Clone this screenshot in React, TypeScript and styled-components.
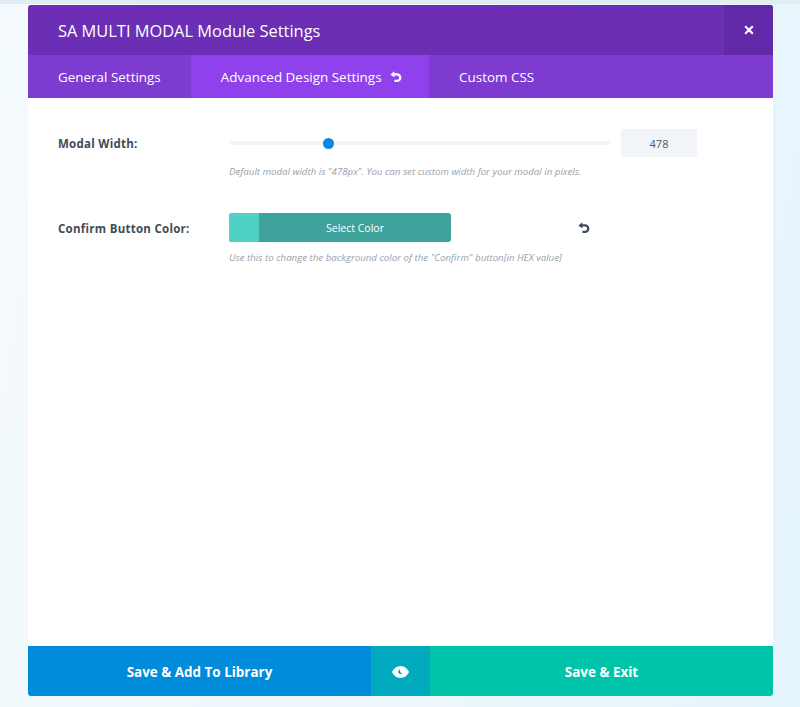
import * as React from 'react';
import styled, { createGlobalStyle } from 'styled-components';

const GlobalStyle = createGlobalStyle`
    html, body {
        margin: 0;
        padding: 0;
        height: 100%;
    }
    body {
        background: linear-gradient(100deg, #f4fafe 0%, #eef7fc 50%, #e6f4fb 100%);
        font-family: "Open Sans", "Liberation Sans", sans-serif;
    }
`;

const Page = styled.div`
    width: 800px;
    height: 707px;
    overflow: hidden;
    box-sizing: border-box;
    padding: 5px 27px 0 28px;
    background: linear-gradient(#e0eef3 0, #e0eef3 4px, transparent 4px);
`;

const Modal = styled.div`
    width: 745px;
    height: 691px;
    display: flex;
    flex-direction: column;
    background: #fff;
    border-radius: 3px;
    overflow: hidden;
`;

const Header = styled.div`
    height: 50px;
    flex: none;
    display: flex;
    justify-content: space-between;
    align-items: stretch;
    background: #6b2eb5;
`;

const Title = styled.h1`
    margin: 0;
    padding-left: 30px;
    line-height: 52px;
    font-size: 16.4px;
    font-weight: 500;
    color: #fff;
`;

const CloseButton = styled.button`
    width: 49px;
    border: 0;
    padding: 0;
    display: flex;
    align-items: center;
    justify-content: center;
    background: #6129a8;
`;

const Tabs = styled.div`
    height: 43px;
    flex: none;
    display: flex;
    background: #7e3bd0;
`;

const Tab = styled.div<{ $active?: boolean }>`
    padding: 0 ${({ $active }) => ($active ? '27.5px' : '30px')} 0 30px;
    display: flex;
    align-items: center;
    gap: 8px;
    font-size: 13.45px;
    font-weight: 500;
    color: #fff;
    background: ${({ $active }) => ($active ? '#8f42ec' : 'transparent')};
`;

const Body = styled.div`
    flex: 1;
    padding: 31px 30px 0;
    display: flex;
    flex-direction: column;
    gap: 33px;
`;

const Option = styled.div`
    display: grid;
    grid-template-columns: 171px 1fr;
    row-gap: 7px;
`;

const Label = styled.label`
    font-size: 11.5px;
    font-weight: 700;
    letter-spacing: 0.27px;
    color: #414c59;
    align-self: center;
`;

const Controls = styled.div`
    display: flex;
    align-items: center;
    gap: 10px;
`;

const SliderTrack = styled.div`
    position: relative;
    width: 382px;
    height: 4px;
    border-radius: 2px;
    background: #f1f5f9;
`;

const SliderThumb = styled.span`
    position: absolute;
    top: -3.5px;
    width: 11px;
    height: 11px;
    margin-left: -5.5px;
    border-radius: 50%;
    background: #0c85de;
`;

const NumberBox = styled.div`
    width: 76px;
    height: 28px;
    border-radius: 3px;
    background: #f1f5f9;
    display: flex;
    align-items: center;
    justify-content: center;
    font-size: 11px;
    color: #555;
`;

const ColorButton = styled.div`
    width: 222px;
    height: 29px;
    display: flex;
    border-radius: 3px;
    overflow: hidden;
    background: #3fa39c;
`;

const Swatch = styled.span`
    width: 30px;
    background: #4fd1c5;
`;

const ColorText = styled.span`
    flex: 1;
    display: flex;
    align-items: center;
    justify-content: center;
    font-size: 10.5px;
    font-weight: 500;
    color: #fff;
`;

const ColorControls = styled(Controls)`
    gap: 127px;
    margin-bottom: 1px;
`;

const Help = styled.p`
    grid-column: 2;
    margin: 0;
    font-size: 9.7px;
    font-style: italic;
    line-height: 16px;
    color: #98a1ab;
`;

const Footer = styled.div`
    height: 50px;
    flex: none;
    display: flex;
`;

const FooterButton = styled.button<{ $bg: string; $width: number }>`
    width: ${({ $width }) => $width}px;
    border: 0;
    padding: 1px 0 0;
    display: flex;
    align-items: center;
    justify-content: center;
    font-family: inherit;
    font-size: 13.45px;
    font-weight: 700;
    color: #fff;
    background: ${({ $bg }) => $bg};
`;

const UndoIcon = ({ color }: { color: string }) => (
    <svg width="12" height="12" viewBox="0 0 12 12" fill="none">
        <path d="M3 3.4 H7 A3.1 3.1 0 0 1 7 9.9 H4.4" stroke={color} strokeWidth="2.3" />
        <path d="M4.4 0.2 L0.4 3.4 L4.4 6.6 Z" fill={color} />
    </svg>
);

const App: React.FC = () => {
    return (
        <Page>
            <GlobalStyle />
            <Modal>
                <Header>
                    <Title>SA MULTI MODAL Module Settings</Title>
                    <CloseButton aria-label="Close">
                        <svg width="10" height="10" viewBox="0 0 10 10">
                            <path d="M1.2 1.2 L8.8 8.8 M8.8 1.2 L1.2 8.8" stroke="#fff" strokeWidth="2.2" />
                        </svg>
                    </CloseButton>
                </Header>
                <Tabs>
                    <Tab>General Settings</Tab>
                    <Tab $active>
                        Advanced Design Settings
                        <UndoIcon color="#fff" />
                    </Tab>
                    <Tab>Custom CSS</Tab>
                </Tabs>
                <Body>
                    <Option>
                        <Label>Modal Width:</Label>
                        <Controls>
                            <SliderTrack>
                                <SliderThumb style={{ left: `${(99 / 382) * 100}%` }} />
                            </SliderTrack>
                            <NumberBox>478</NumberBox>
                        </Controls>
                        <Help>Default modal width is "478px". You can set custom width for your modal in pixels.</Help>
                    </Option>
                    <Option>
                        <Label>Confirm Button Color:</Label>
                        <ColorControls>
                            <ColorButton>
                                <Swatch />
                                <ColorText>Select Color</ColorText>
                            </ColorButton>
                            <UndoIcon color="#414c59" />
                        </ColorControls>
                        <Help>Use this to change the background color of the "Confirm" button[in HEX value]</Help>
                    </Option>
                </Body>
                <Footer>
                    <FooterButton $bg="#008bdb" $width={343}>Save &amp; Add To Library</FooterButton>
                    <FooterButton $bg="#00a9bd" $width={59} aria-label="Preview">
                        <svg width="17" height="12" viewBox="0 0 17 12">
                            <path d="M8.5 0 C12.5 0 15.6 2.8 17 6 C15.6 9.2 12.5 12 8.5 12 C4.5 12 1.4 9.2 0 6 C1.4 2.8 4.5 0 8.5 0 Z" fill="#fff" />
                            <path d="M8 3.4 A2.4 2.4 0 1 0 10.6 7 L8.2 6.4 Z" fill="#00a9bd" />
                        </svg>
                    </FooterButton>
                    <FooterButton $bg="#00c4aa" $width={343}>Save &amp; Exit</FooterButton>
                </Footer>
            </Modal>
        </Page>
    );
};

export default App;
